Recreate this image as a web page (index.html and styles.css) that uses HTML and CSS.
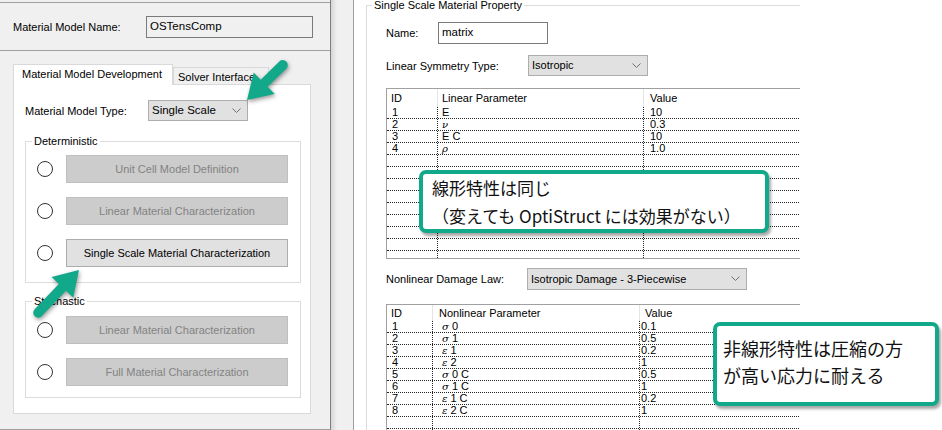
FILE: index.html
```html
<!DOCTYPE html>
<html lang="ja">
<head>
<meta charset="utf-8">
<title>Material Model</title>
<link rel="stylesheet" href="styles.css">
</head>
<body>
<div class="screen">
  <aside class="left">
    <div class="name-row">
      <span class="lbl lbl-name">Material Model Name:</span>
      <div class="input input-disabled">OSTensComp</div>
    </div>
    <div class="tabs-area">
      <div class="tabbar">
        <div class="tab tab-active">Material Model Development</div>
        <div class="tab tab-inactive">Solver Interface</div>
      </div>
      <div class="tabpanel">
        <div class="type-row">
          <span class="lbl lbl-type">Material Model Type:</span>
          <div class="select select-type"><span>Single Scale</span><svg class="chev" width="9" height="5" viewBox="0 0 9 5"><polyline points="0.5,0.5 4.5,4.5 8.5,0.5"/></svg></div>
        </div>
        <fieldset class="group group-det">
          <legend>Deterministic</legend>
          <div class="opt"><span class="radio"></span><div class="btn btn-disabled">Unit Cell Model Definition</div></div>
          <div class="opt"><span class="radio"></span><div class="btn btn-disabled">Linear Material Characterization</div></div>
          <div class="opt"><span class="radio"></span><div class="btn">Single Scale Material Characterization</div></div>
        </fieldset>
        <fieldset class="group group-sto">
          <legend>Stochastic</legend>
          <div class="opt"><span class="radio"></span><div class="btn btn-disabled">Linear Material Characterization</div></div>
          <div class="opt"><span class="radio"></span><div class="btn btn-disabled">Full Material Characterization</div></div>
        </fieldset>
      </div>
    </div>
  </aside>
  <div class="gutter"></div>
  <main class="right">
    <fieldset class="prop">
      <legend>Single Scale Material Property</legend>
      <div class="row row-name">
        <span class="lbl w-name">Name:</span>
        <div class="input input-name">matrix</div>
      </div>
      <div class="row row-sym">
        <span class="lbl w-sym">Linear Symmetry Type:</span>
        <div class="select select-sym"><span>Isotropic</span><svg class="chev" width="9" height="5" viewBox="0 0 9 5"><polyline points="0.5,0.5 4.5,4.5 8.5,0.5"/></svg></div>
      </div>
      <div class="table t1">
        <div class="thead"><div class="th">ID</div><div class="th">Linear Parameter</div><div class="th">Value</div></div>
        <div class="tr"><div class="td">1</div><div class="td">E</div><div class="td">10</div></div>
        <div class="tr"><div class="td">2</div><div class="td"><i>ν</i></div><div class="td">0.3</div></div>
        <div class="tr"><div class="td">3</div><div class="td">E C</div><div class="td">10</div></div>
        <div class="tr"><div class="td">4</div><div class="td"><i>ρ</i></div><div class="td">1.0</div></div>
        <div class="tr"><div class="td"></div><div class="td"></div><div class="td"></div></div>
        <div class="tr"><div class="td"></div><div class="td"></div><div class="td"></div></div>
        <div class="tr"><div class="td"></div><div class="td"></div><div class="td"></div></div>
        <div class="tr"><div class="td"></div><div class="td"></div><div class="td"></div></div>
        <div class="tr"><div class="td"></div><div class="td"></div><div class="td"></div></div>
        <div class="tr"><div class="td"></div><div class="td"></div><div class="td"></div></div>
        <div class="tr"><div class="td"></div><div class="td"></div><div class="td"></div></div>
        <div class="tr"><div class="td"></div><div class="td"></div><div class="td"></div></div>
        <div class="tr"><div class="td"></div><div class="td"></div><div class="td"></div></div>
      </div>
      <div class="row row-dmg">
        <span class="lbl w-dmg">Nonlinear Damage Law:</span>
        <div class="select select-dmg"><span>Isotropic Damage - 3-Piecewise</span><svg class="chev" width="9" height="5" viewBox="0 0 9 5"><polyline points="0.5,0.5 4.5,4.5 8.5,0.5"/></svg></div>
      </div>
      <div class="table t2">
        <div class="thead"><div class="th">ID</div><div class="th">Nonlinear Parameter</div><div class="th">Value</div></div>
        <div class="tr"><div class="td">1</div><div class="td g"><i>σ</i> 0</div><div class="td">0.1</div></div>
        <div class="tr"><div class="td">2</div><div class="td g"><i>σ</i> 1</div><div class="td">0.5</div></div>
        <div class="tr"><div class="td">3</div><div class="td g"><i>ε</i> 1</div><div class="td">0.2</div></div>
        <div class="tr"><div class="td">4</div><div class="td g"><i>ε</i> 2</div><div class="td">1</div></div>
        <div class="tr"><div class="td">5</div><div class="td g"><i>σ</i> 0 C</div><div class="td">0.5</div></div>
        <div class="tr"><div class="td">6</div><div class="td g"><i>σ</i> 1 C</div><div class="td">1</div></div>
        <div class="tr"><div class="td">7</div><div class="td g"><i>ε</i> 1 C</div><div class="td">0.2</div></div>
        <div class="tr"><div class="td">8</div><div class="td g"><i>ε</i> 2 C</div><div class="td">1</div></div>
        <div class="tr"><div class="td"></div><div class="td"></div><div class="td"></div></div>
        <div class="tr"><div class="td"></div><div class="td"></div><div class="td"></div></div>
      </div>
    </fieldset>
  </main>
</div>

<div class="callout callout-1">線形特性は同じ<br>（変えても OptiStruct には効果がない）</div>
<div class="callout callout-2">非線形特性は圧縮の方<br>が高い応力に耐える</div>

<svg class="arrows" width="942" height="430" viewBox="0 0 942 430">
  <g transform="translate(247 100) rotate(135.7)">
    <path d="M0,0 L-24,-15 L-24,-5 L-50,-5 A5,5 0 0 0 -50,5 L-24,5 L-24,15 Z"/>
  </g>
  <g transform="translate(79 270) rotate(-46.3)">
    <path d="M0,0 L-24,-15 L-24,-5 L-59,-5 A5,5 0 0 0 -59,5 L-24,5 L-24,15 Z"/>
  </g>
</svg>
</body>
</html>
```
FILE: styles.css
```css
* { box-sizing: border-box; }
html, body { margin: 0; padding: 0; }
body {
  width: 942px;
  height: 430px;
  overflow: hidden;
  position: relative;
  background: #fff;
  color: #000;
  font-family: "Liberation Sans", Arial, sans-serif;
  font-size: 11px;
}
.screen { display: flex; height: 430px; }

/* ---------- left panel ---------- */
.left {
  width: 331px;
  flex: none;
  height: 430px;
  background: #f0f0f0;
  border-right: 1px solid #7d7d7d;
  border-bottom: 1px solid #a0a0a0;
  padding-top: 2px;
}
.name-row {
  height: 49px;
  border-top: 1px solid #a0a0a0;
  border-bottom: 1px solid #a0a0a0;
  display: flex;
  align-items: center;
  padding-left: 13px;
}
.lbl { white-space: nowrap; }
.lbl-name { width: 133px; }
.input {
  height: 22px;
  border: 1px solid #7a7a7a;
  background: #fff;
  padding: 0 3px 2px;
  display: flex;
  align-items: center;
  font-size: 11.5px;
}
.input-disabled { width: 167px; background: #f0f0f0; }

.tabs-area { padding: 13px 0 0 13px; }
.tabbar { display: flex; align-items: flex-end; height: 20px; }
.tab {
  border: 1px solid #d9d9d9;
  border-bottom: none;
  white-space: nowrap;
  overflow: hidden;
}
.tab-active {
  width: 160px;
  height: 21px;
  margin-bottom: -1px;
  background: #fff;
  padding: 3px 0 0 8px;
  position: relative;
  z-index: 1;
}
.tab-inactive {
  width: 96px;
  height: 17px;
  background: #f0f0f0;
  padding: 3px 0 0 4px;
}
.tabpanel {
  width: 298px;
  height: 330px;
  border: 1px solid #d9d9d9;
  background: #fff;
  padding: 15px 0 0 11px;
}
.type-row { display: flex; align-items: center; height: 21px; }
.lbl-type { width: 123px; }
.select {
  height: 21px;
  background: #e1e1e1;
  border: 1px solid #adadad;
  display: flex;
  align-items: center;
  justify-content: space-between;
  padding: 0 6px 1px 3px;
  white-space: nowrap;
}
.select-type { width: 100px; font-size: 11.5px; }
.chev { flex: none; }
.chev polyline { fill: none; stroke: #707070; stroke-width: 1; }

.group {
  width: 276px;
  margin: 14px 0 0;
  border: 1px solid #dcdcdc;
  padding: 7px 11px 15px;
  display: flex;
  flex-direction: column;
  gap: 14px;
  min-inline-size: 0;
}
.group legend {
  line-height: 13px;
  padding: 0 2px;
  margin-left: -5px;
}
.group-sto { margin-top: 12px; padding-top: 8px; padding-bottom: 11px; }
.opt { display: flex; align-items: center; height: 28px; }
.radio {
  width: 16px;
  height: 16px;
  border-radius: 50%;
  border: 1px solid #333;
  background: #fff;
  flex: none;
  margin-right: 13px;
}
.btn {
  width: 222px;
  height: 28px;
  border: 1px solid #adadad;
  background: #e1e1e1;
  display: flex;
  align-items: center;
  justify-content: center;
  white-space: nowrap;
  font-size: 11px;
}
.btn-disabled { background: #cccccc; border-color: #bfbfbf; color: #838383; }

/* ---------- gutter ---------- */
.gutter {
  width: 23px;
  flex: none;
  background: linear-gradient(to right, #d6d6d6, #f0f0f0 6px);
  border-right: 1px solid #a0a0a0;
}

/* ---------- right panel ---------- */
.right {
  width: 446px;
  flex: none;
  height: 430px;
  overflow: hidden;
  background: #fff;
}
.prop {
  width: 520px;
  margin: 0 0 0 12px;
  border: 1px solid #dcdcdc;
  padding: 11px 0 0 19px;
  min-inline-size: 0;
  height: 460px;
}
.prop legend {
  line-height: 11px;
  padding: 0 2px;
  margin-left: -14px;
}
.row { display: flex; align-items: center; }
.row-name { height: 22px; margin-bottom: 11px; }
.row-sym { height: 21px; margin-bottom: 12px; }
.row-dmg { height: 22px; margin-top: 9px; margin-bottom: 14px; }
.w-name { width: 52px; }
.w-sym { width: 142px; }
.w-dmg { width: 141px; }
.input-name { width: 110px; }
.select-sym { width: 120px; }
.select-dmg { width: 220px; height: 22px; }

.table {
  width: 480px;
  border: 1px solid #a0a0a0;
  overflow: hidden;
}
.t1 { height: 171px; }
.t2 { height: 200px; }
.thead, .tr { display: grid; }
.t1 .thead, .t1 .tr { grid-template-columns: 51px 206px 1fr; }
.t2 .thead, .t2 .tr { grid-template-columns: 46px 207px 1fr; }
.t1 .thead { height: 18px; }
.t2 .thead { height: 16px; }
.th {
  display: flex;
  align-items: center;
  padding-left: 4px;
  border-right: 1px solid #e4e4e4;
  white-space: nowrap;
}
.th:last-child { border-right: none; padding-left: 6px; }
.t2 .th:nth-child(2) { padding-left: 6px; }
.t2 .th:last-child { padding-left: 5px; }
.tr {
  height: 12px;
  border-bottom: 1px dotted #222;
}
.td {
  font-size: 11px;
  line-height: 11px;
  padding-left: 5px;
  border-right: 1px dotted #222;
  white-space: nowrap;
  overflow: hidden;
}
.td:nth-child(2) { padding-left: 4px; }
.td:last-child { border-right: none; padding-left: 6px; }
.t2 .td.g { padding-left: 9px; }
.t2 .td:last-child { padding-left: 1px; }
.td i { font-family: "DejaVu Serif", serif; font-size: 10px; }

/* ---------- callouts (overlay) ---------- */
.callout {
  position: absolute;
  background: #fff;
  border: 4px solid #12a98b;
  border-radius: 7px;
  box-shadow: 2px 3px 3px rgba(0, 0, 0, 0.35);
  font-family: "Noto Sans CJK JP", "Noto Sans", sans-serif;
  font-size: 18px;
  color: #111;
  white-space: nowrap;
}
.callout-1 {
  left: 419px;
  top: 170px;
  width: 350px;
  height: 63px;
  padding: 0 0 0 9px;
  line-height: 28px;
  font-size: 17px;
}
.callout-2 {
  left: 713px;
  top: 322px;
  width: 226px;
  height: 84px;
  padding: 9px 0 0 6px;
  line-height: 27px;
}

.arrows {
  position: absolute;
  left: 0;
  top: 0;
  pointer-events: none;
  filter: drop-shadow(1px 2px 2px rgba(0, 0, 0, 0.4));
}
.arrows path { fill: #12a98b; }
```
